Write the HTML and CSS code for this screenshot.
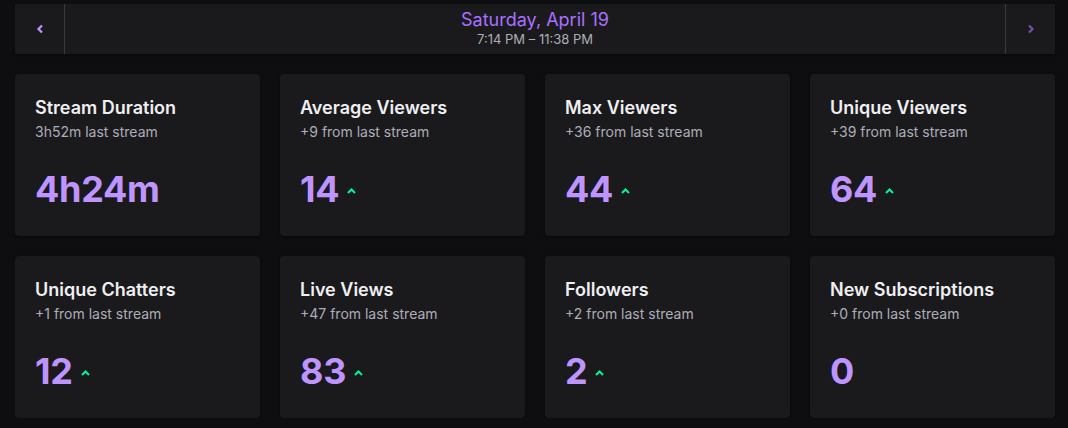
FILE: index.html
```html
<!DOCTYPE html>
<html>
<head>
<meta charset="utf-8">
<link rel="stylesheet" href="styles.css">
</head>
<body>
<div class="page">
  <div class="nav">
    <button class="nav-btn prev"><svg width="8" height="10" viewBox="0 0 8 10"><path d="M6 1.5 L2.5 5 L6 8.5" fill="none" stroke="#bf94ff" stroke-width="2.2"/></svg></button>
    <div class="nav-center">
      <div class="nav-date">Saturday, April 19</div>
      <div class="nav-time">7:14 PM – 11:38 PM</div>
    </div>
    <button class="nav-btn next"><svg width="8" height="10" viewBox="0 0 8 10"><path d="M2 1.5 L5.5 5 L2 8.5" fill="none" stroke="#6f52a6" stroke-width="2.2"/></svg></button>
  </div>
  <div class="grid">
    <div class="card"><div class="title">Stream Duration</div><div class="sub">3h52m last stream</div><div class="value">4h24m</div></div>
    <div class="card"><div class="title">Average Viewers</div><div class="sub">+9 from last stream</div><div class="value">14<svg class="up" width="9" height="6" viewBox="0 0 9 6"><path d="M1 5 L4.5 1.5 L8 5" fill="none" stroke="#00f593" stroke-width="2"/></svg></div></div>
    <div class="card"><div class="title">Max Viewers</div><div class="sub">+36 from last stream</div><div class="value">44<svg class="up" width="9" height="6" viewBox="0 0 9 6"><path d="M1 5 L4.5 1.5 L8 5" fill="none" stroke="#00f593" stroke-width="2"/></svg></div></div>
    <div class="card"><div class="title">Unique Viewers</div><div class="sub">+39 from last stream</div><div class="value">64<svg class="up" width="9" height="6" viewBox="0 0 9 6"><path d="M1 5 L4.5 1.5 L8 5" fill="none" stroke="#00f593" stroke-width="2"/></svg></div></div>
    <div class="card"><div class="title">Unique Chatters</div><div class="sub">+1 from last stream</div><div class="value">12<svg class="up" width="9" height="6" viewBox="0 0 9 6"><path d="M1 5 L4.5 1.5 L8 5" fill="none" stroke="#00f593" stroke-width="2"/></svg></div></div>
    <div class="card"><div class="title">Live Views</div><div class="sub">+47 from last stream</div><div class="value">83<svg class="up" width="9" height="6" viewBox="0 0 9 6"><path d="M1 5 L4.5 1.5 L8 5" fill="none" stroke="#00f593" stroke-width="2"/></svg></div></div>
    <div class="card"><div class="title">Followers</div><div class="sub">+2 from last stream</div><div class="value">2<svg class="up" width="9" height="6" viewBox="0 0 9 6"><path d="M1 5 L4.5 1.5 L8 5" fill="none" stroke="#00f593" stroke-width="2"/></svg></div></div>
    <div class="card"><div class="title">New Subscriptions</div><div class="sub">+0 from last stream</div><div class="value">0</div></div>
  </div>
</div>
</body>
</html>
```
FILE: styles.css
```css
html, body { margin: 0; padding: 0; }
body {
  background: #0e0e10;
  font-family: Inter, "Noto Sans", sans-serif;
  color: #efeff1;
}
.page { padding: 4px 13px 0 15px; }
.nav {
  display: flex;
  height: 50px;
  background: #1a1a1d;
  box-shadow: 0 1px 2px rgba(0,0,0,0.6);
}
.nav-btn {
  width: 50px;
  border: none;
  background: transparent;
  display: flex;
  align-items: center;
  justify-content: center;
  padding: 0;
}
.nav-btn.prev { border-right: 1px solid #39393f; }
.nav-btn.next { border-left: 1px solid #39393f; }
.nav-center {
  flex: 1;
  display: flex;
  flex-direction: column;
  align-items: center;
  justify-content: center;
}
.nav-date { color: #a970ff; font-size: 18px; line-height: 22px; margin-top: -2px; }
.nav-time { color: #adadb8; font-size: 13px; line-height: 16px; }
.grid {
  margin-top: 20px;
  display: grid;
  grid-template-columns: repeat(4, 245px);
  column-gap: 20px;
  row-gap: 20px;
}
.card {
  background: #1a1a1d;
  border-radius: 4px;
  height: 162px;
  padding: 23px 20px 0 20px;
  box-sizing: border-box;
  box-shadow: 0 1px 3px rgba(0,0,0,0.5);
}
.title { font-size: 18px; font-weight: 600; line-height: 22px; }
.sub { font-size: 14px; color: #adadb8; line-height: 18px; margin-top: 4px; }
.value {
  margin-top: 26px;
  font-size: 36px;
  font-weight: 700;
  letter-spacing: -0.3px;
  color: #bf94ff;
  line-height: 44px;
  display: flex;
  align-items: center;
}
.up {
  margin-left: 8px;
  margin-top: 4px;
}
```
